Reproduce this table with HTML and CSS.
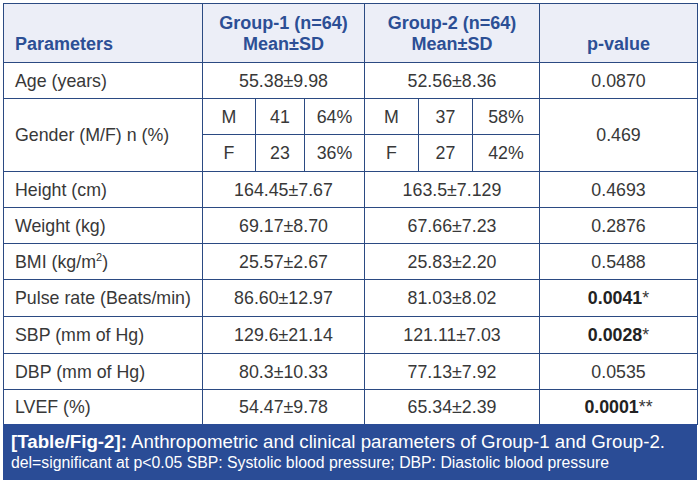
FILE: index.html
```html
<!DOCTYPE html>
<html>
<head>
<meta charset="utf-8">
<link rel="stylesheet" href="styles.css">
</head>
<body>
<div class="figure">
  <table class="data">
    <colgroup>
      <col class="c-param">
      <col class="c-g1a"><col class="c-g1b"><col class="c-g1c">
      <col class="c-g2a"><col class="c-g2b"><col class="c-g2c">
      <col class="c-p">
    </colgroup>
    <thead>
      <tr class="head">
        <th class="left">Parameters</th>
        <th colspan="3">Group-1 (n=64)<br>Mean±SD</th>
        <th colspan="3">Group-2 (n=64)<br>Mean±SD</th>
        <th>p-value</th>
      </tr>
    </thead>
    <tbody>
      <tr class="r36"><td class="left">Age (years)</td><td colspan="3">55.38±9.98</td><td colspan="3">52.56±8.36</td><td>0.0870</td></tr>
      <tr class="r36"><td class="left" rowspan="2">Gender (M/F) n (%)</td><td>M</td><td>41</td><td>64%</td><td>M</td><td>37</td><td>58%</td><td rowspan="2">0.469</td></tr>
      <tr class="r37"><td>F</td><td>23</td><td>36%</td><td>F</td><td>27</td><td>42%</td></tr>
      <tr class="r36"><td class="left">Height (cm)</td><td colspan="3">164.45±7.67</td><td colspan="3">163.5±7.129</td><td>0.4693</td></tr>
      <tr class="r36"><td class="left">Weight (kg)</td><td colspan="3">69.17±8.70</td><td colspan="3">67.66±7.23</td><td>0.2876</td></tr>
      <tr class="r36"><td class="left">BMI (kg/m<sup>2</sup>)</td><td colspan="3">25.57±2.67</td><td colspan="3">25.83±2.20</td><td>0.5488</td></tr>
      <tr class="r37"><td class="left">Pulse rate (Beats/min)</td><td colspan="3">86.60±12.97</td><td colspan="3">81.03±8.02</td><td><b>0.0041</b>*</td></tr>
      <tr class="r37"><td class="left">SBP (mm of Hg)</td><td colspan="3">129.6±21.14</td><td colspan="3">121.11±7.03</td><td><b>0.0028</b>*</td></tr>
      <tr class="r36"><td class="left">DBP (mm of Hg)</td><td colspan="3">80.3±10.33</td><td colspan="3">77.13±7.92</td><td>0.0535</td></tr>
      <tr class="r35"><td class="left">LVEF (%)</td><td colspan="3">54.47±9.78</td><td colspan="3">65.34±2.39</td><td><b>0.0001</b>**</td></tr>
    </tbody>
  </table>
  <div class="caption">
    <p class="cap-main"><b>[Table/Fig-2]:</b> Anthropometric and clinical parameters of Group-1 and Group-2.</p>
    <p class="cap-note">del=significant at p&lt;0.05 SBP: Systolic blood pressure; DBP: Diastolic blood pressure</p>
  </div>
</div>
</body>
</html>
```
FILE: styles.css
```css
html, body {
  margin: 0;
  padding: 0;
  background: #ffffff;
}
body {
  font-family: "Liberation Sans", Arial, sans-serif;
  color: #383838;
}
.figure {
  padding: 3px 3px 0 3px;
  width: 694px;
}
.data {
  width: 694px;
  border-collapse: collapse;
  table-layout: fixed;
  border: 1px solid #2b4a82;
}
.c-param { width: 199px; }
.c-g1a { width: 53px; }
.c-g1b { width: 49px; }
.c-g1c { width: 60px; }
.c-g2a { width: 54px; }
.c-g2b { width: 54px; }
.c-g2c { width: 67px; }
.c-p { width: 158px; }
.data th, .data td {
  border: 1px solid #2b4a82;
  padding: 0;
  text-align: center;
  vertical-align: middle;
  font-size: 17.8px;
  line-height: 20px;
  white-space: nowrap;
}
.data th {
  background: #eceef7;
  color: #2c4f95;
  font-size: 18px;
  line-height: 21px;
  vertical-align: bottom;
  padding-bottom: 7px;
}
.data .left {
  text-align: left;
  padding-left: 11px;
}
.head { height: 59px; }
.r35 { height: 35px; }
.r36 { height: 36px; }
.r37 { height: 37px; }
.data b {
  color: #222222;
}
sup {
  font-size: 11px;
  line-height: 0;
  vertical-align: 7px;
}
.caption {
  background: #2a4c96;
  color: #ffffff;
  height: 56px;
  padding: 6px 0 0 8px;
  box-sizing: border-box;
  margin-top: -1px;
}
.caption p {
  margin: 0;
  white-space: nowrap;
}
.cap-main {
  font-size: 18.7px;
  line-height: 23px;
}
.cap-note {
  font-size: 15.8px;
  line-height: 20px;
}
```
